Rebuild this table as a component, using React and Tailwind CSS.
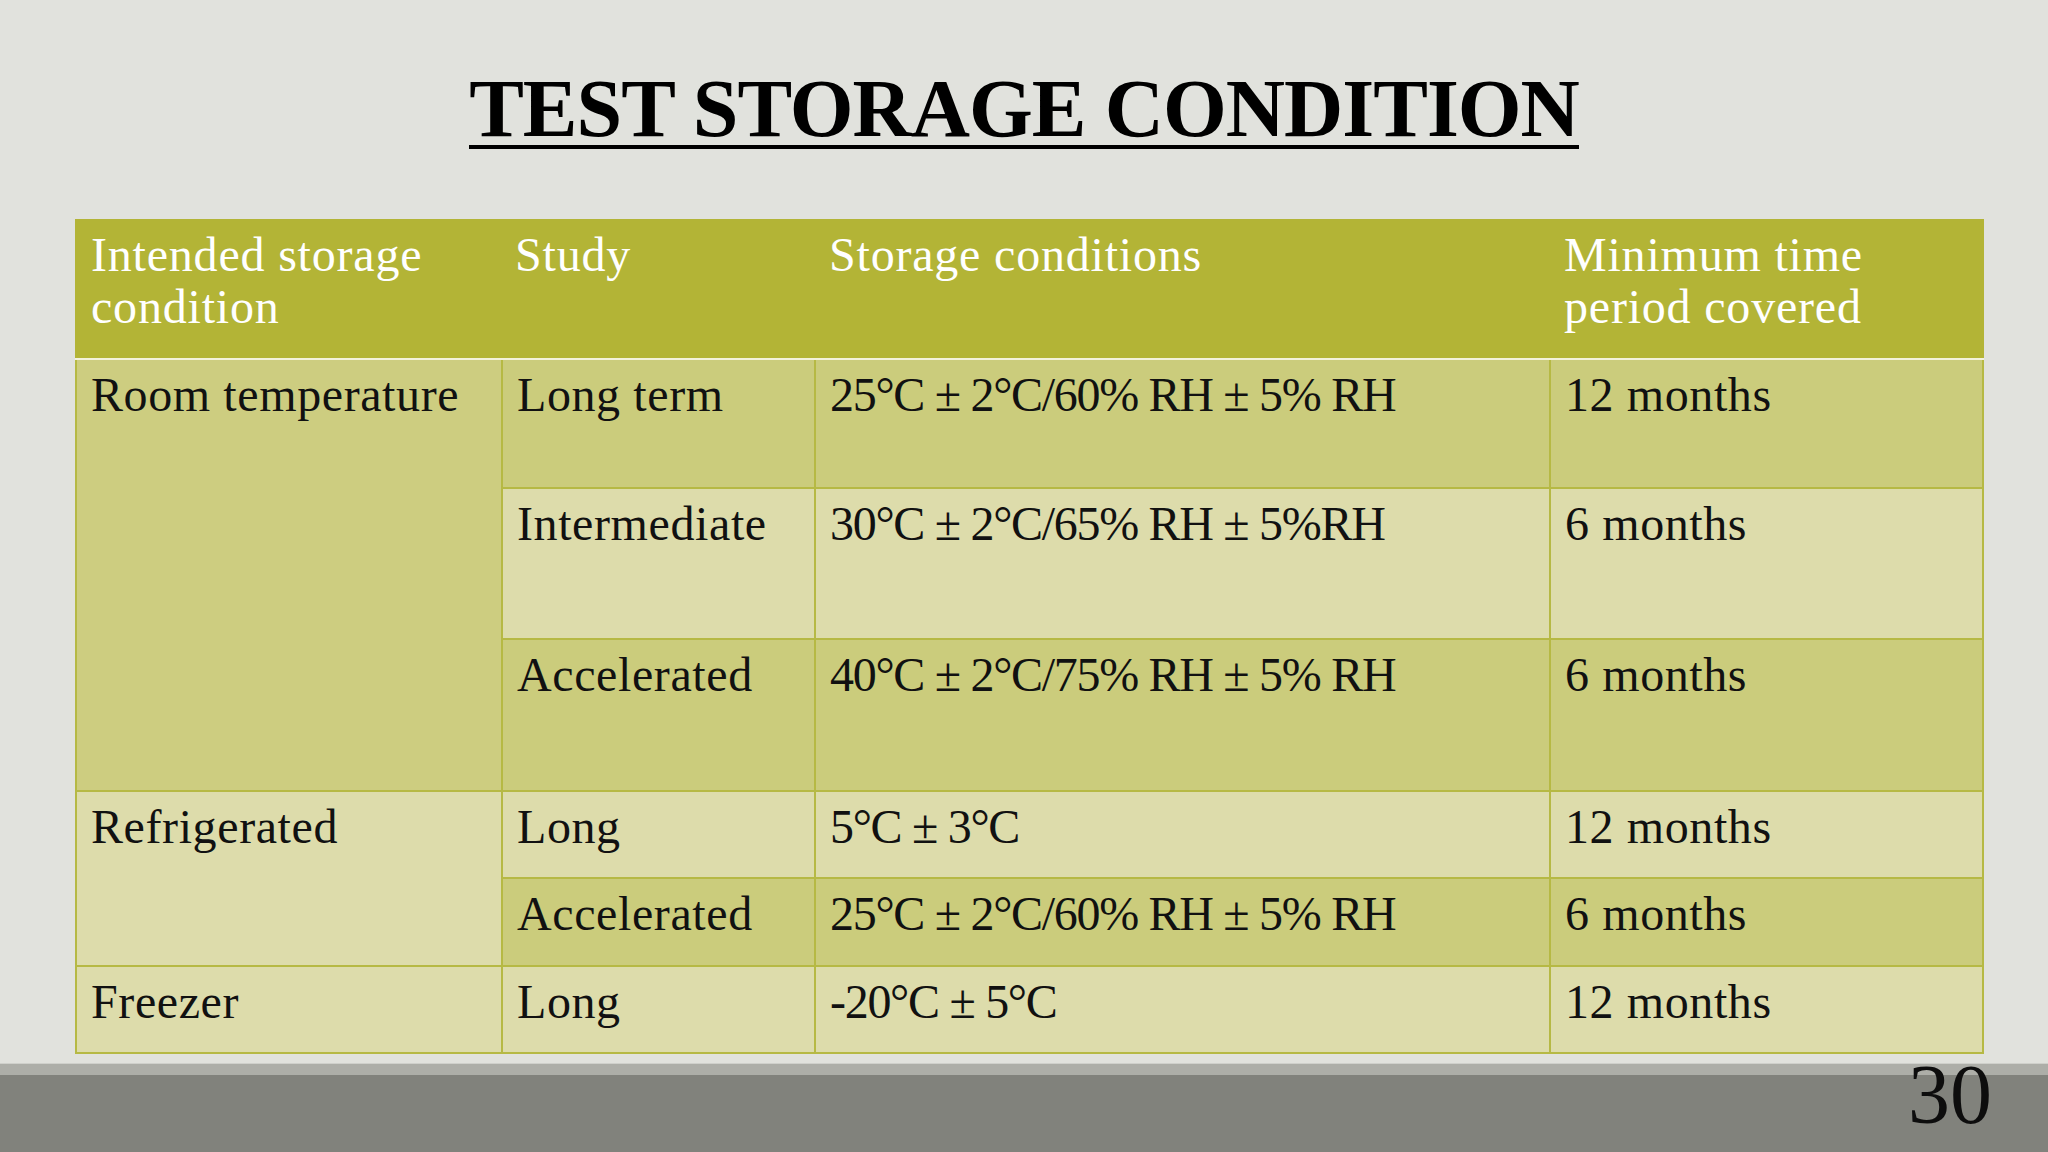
import React from "react";

const DARK = "bg-[#cbcc7c]";
const LIGHT = "bg-[#dddcab]";

function Cell({ className = "", children }) {
  return (
    <div className={`pl-[14px] pt-[6px] text-[48px] leading-[58px] text-[#111] ${className}`}>
      {children}
    </div>
  );
}

const T = "tracking-[-1.3px]";

export default function App() {
  return (
    <div className="w-[2048px] h-[1152px] overflow-hidden flex flex-col bg-[#e1e2dd] font-['Liberation_Serif',serif] tracking-[0.6px]">
      <div className="pt-[73px] flex justify-center">
        <h1 className="inline-block text-[82px] leading-[72px] font-bold tracking-[-1px] text-black border-b-[4px] border-black">
          TEST STORAGE CONDITION
        </h1>
      </div>

      <div className="ml-[75px] mt-[70px] w-[1909px] flex flex-col">
        <div className="grid grid-cols-[426px_313px_735px_435px] h-[139px] bg-[#b3b436] text-white text-[48px] leading-[52px] pt-[10px] tracking-[0.8px]">
          <div className="pl-[16px]">Intended storage<br />condition</div>
          <div className="pl-[14px]">Study</div>
          <div className="pl-[15px]">Storage conditions</div>
          <div className="pl-[15px]">Minimum time<br />period covered</div>
        </div>
        <div className="h-[2px] bg-[#f3f2dc]" />
        <div className="grid grid-cols-[424px_311px_733px_431px] grid-rows-[127px_149px_150px_85px_86px_85px] gap-[2px] px-[2px] pb-[2px] bg-[#b6b944]">
          <Cell className="row-span-3 bg-[#cdcd80]">Room temperature</Cell>
          <Cell className={DARK}>Long term</Cell>
          <Cell className={`${DARK} ${T}`}>25°C ± 2°C/60% RH ± 5% RH</Cell>
          <Cell className={DARK}>12 months</Cell>

          <Cell className={LIGHT}>Intermediate</Cell>
          <Cell className={`${LIGHT} ${T}`}>30°C ± 2°C/65% RH ± 5%RH</Cell>
          <Cell className={LIGHT}>6 months</Cell>

          <Cell className={DARK}>Accelerated</Cell>
          <Cell className={`${DARK} ${T}`}>40°C ± 2°C/75% RH ± 5% RH</Cell>
          <Cell className={DARK}>6 months</Cell>

          <Cell className={`row-span-2 ${LIGHT}`}>Refrigerated</Cell>
          <Cell className={LIGHT}>Long</Cell>
          <Cell className={`${LIGHT} ${T}`}>5°C ± 3°C</Cell>
          <Cell className={LIGHT}>12 months</Cell>

          <Cell className={DARK}>Accelerated</Cell>
          <Cell className={`${DARK} ${T}`}>25°C ± 2°C/60% RH ± 5% RH</Cell>
          <Cell className={DARK}>6 months</Cell>

          <Cell className={LIGHT}>Freezer</Cell>
          <Cell className={LIGHT}>Long</Cell>
          <Cell className={`${LIGHT} ${T}`}>-20°C ± 5°C</Cell>
          <Cell className={LIGHT}>12 months</Cell>
        </div>
      </div>

      <div className="mt-auto relative">
        <div className="h-[1px] bg-[#cfd0cb]" />
        <div className="h-[11px] bg-[#adaea8]" />
        <div className="h-[77px] bg-[#81827c]" />
        <div className="absolute left-[1908px] top-[-10px] text-[84px] leading-[84px] tracking-normal text-[#0d0d0d]">30</div>
      </div>
    </div>
  );
}
